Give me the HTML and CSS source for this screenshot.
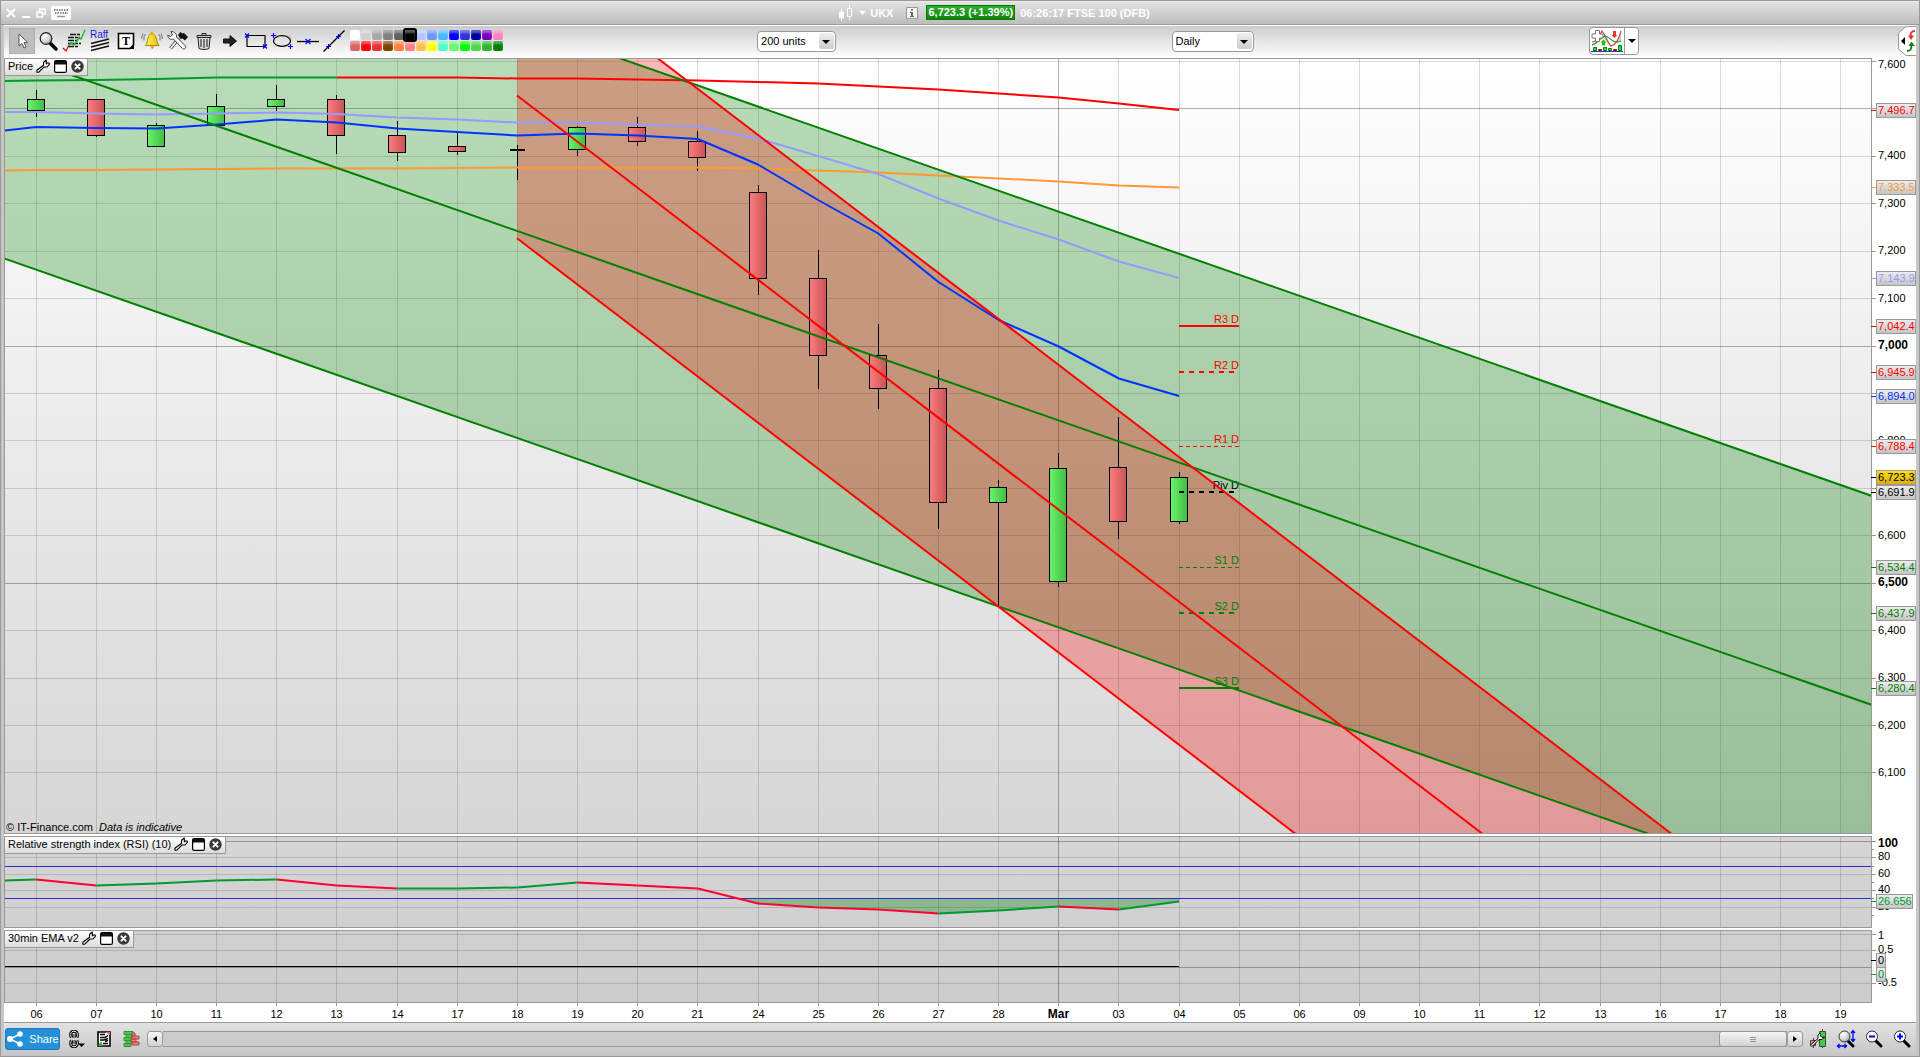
FILE: index.html
```html
<!DOCTYPE html>
<html lang="en">
<head>
<meta charset="utf-8">
<title>UKX – FTSE 100 (DFB)</title>
<link rel="stylesheet" href="styles.css">
</head>
<body>
<svg class="shared-defs" width="0" height="0" aria-hidden="true">
  <defs>
    <linearGradient id="bg-price" x1="0" y1="0" x2="0" y2="1"><stop offset="0" stop-color="#ffffff"/><stop offset="1" stop-color="#d6d6d6"/></linearGradient>
    <linearGradient id="bg-rsi" x1="0" y1="0" x2="0" y2="1"><stop offset="0" stop-color="#d6d6d6"/><stop offset="1" stop-color="#d0d0d0"/></linearGradient>
    <linearGradient id="bg-ema" x1="0" y1="0" x2="0" y2="1"><stop offset="0" stop-color="#d0d0d0"/><stop offset="1" stop-color="#cccccc"/></linearGradient>
    <linearGradient id="candle-up" x1="0" y1="0" x2="1" y2="0"><stop offset="0" stop-color="#69f569"/><stop offset="1" stop-color="#43bb43"/></linearGradient>
    <linearGradient id="candle-down" x1="0" y1="0" x2="1" y2="0"><stop offset="0" stop-color="#fb7d7d"/><stop offset="1" stop-color="#c95555"/></linearGradient>
    <linearGradient id="tag-grey" x1="0" y1="0" x2="0" y2="1"><stop offset="0" stop-color="#eeeeee"/><stop offset="1" stop-color="#c4c4c4"/></linearGradient>
    <linearGradient id="tag-gold" x1="0" y1="0" x2="0" y2="1"><stop offset="0" stop-color="#ffe01c"/><stop offset="1" stop-color="#d9ac10"/></linearGradient>
    <radialGradient id="lens" cx="0.35" cy="0.3" r="0.8"><stop offset="0" stop-color="#ffffff"/><stop offset="0.6" stop-color="#d2d2d2"/><stop offset="1" stop-color="#8c8c8c"/></radialGradient>
    <linearGradient id="gold" x1="0" y1="0" x2="1" y2="0"><stop offset="0" stop-color="#fff36b"/><stop offset="1" stop-color="#f0b400"/></linearGradient>
    <symbol id="wrench" viewBox="0 0 14 14"><path d="M10.300 1 7.600 3.200v3L.9 11.300v1.900h1.900L8 8h3l2.300-2.600V4h-2l-1 .9V2.500z" fill="#fff" stroke="#000" stroke-width="1.100" stroke-linejoin="round"/></symbol>
    <symbol id="restore" viewBox="0 0 13 13"><rect x=".6" y=".6" width="11.8" height="11.8" rx="1.5" fill="#fff" stroke="#000" stroke-width="1.2"/><path d="M1 1h11v3.5H1z" fill="#111"/></symbol>
    <symbol id="close" viewBox="0 0 13 13"><circle cx="6.5" cy="6.5" r="6.2" fill="#3a3a3a"/><path d="M4.4 4.4l4.2 4.2M8.6 4.4 4.4 8.6" stroke="#fff" stroke-width="2" stroke-linecap="round"/></symbol>
  </defs>
</svg>

<header class="titlebar">
  <div class="window-controls">
    <button type="button" aria-label="Close window"><svg width="10" height="10" viewBox="0 0 10 10"><path d="M1 1l8 8M9 1 1 9" stroke="#fff" stroke-width="2"/></svg></button>
    <button type="button" aria-label="Minimise"><svg width="10" height="10" viewBox="0 0 10 10"><path d="M1 9h8" stroke="#fff" stroke-width="2"/></svg></button>
    <button type="button" aria-label="Restore"><svg width="10" height="10" viewBox="0 0 10 10"><path d="M3.5 3V1h6v5H7M1 4h5.5v5H1zM3.500 1.500h6M1 4.500h5.500" fill="none" stroke="#fff" stroke-width="1.4"/></svg></button>
    <button type="button" aria-label="Keyboard"><svg width="20" height="14" viewBox="0 0 20 14"><rect width="20" height="14" rx="2" fill="#fff"/><path d="M3 4h14M4 7h13" stroke="#888" stroke-width="2" stroke-dasharray="1.500 1"/><path d="M6 10.500h8" stroke="#999" stroke-width="1.500"/></svg></button>
  </div>
  <div class="instrument">
    <button type="button" class="symbol-button"><svg width="15" height="16" viewBox="0 0 15 16"><path d="M3.500 4v12M11.500 0v15" stroke="#fff"/><path d="M1 6.500h5v7H1z" fill="#fff"/><path d="M9.500 3.500h4v8h-4z" fill="#cfcfcf" stroke="#fff"/></svg><svg width="7" height="4" viewBox="0 0 7 4"><path d="M0 0h7L3.500 4z" fill="#fff"/></svg>UKX</button>
    <button type="button" class="info" aria-label="Information"><svg width="12" height="12" viewBox="0 0 12 12"><path d="M.5.500h11v11H.5z" fill="#f4f4f4" stroke="#999"/><path d="M5 2h2v1.500H5zM4 5h3v4h1v1H4V9h1V6H4z" fill="#666"/></svg></button>
    <output class="quote">6,723.3 (+1.39%)</output>
    <span class="clock">06:26:17 FTSE 100 (DFB)</span>
  </div>
</header>

<main class="window">
  <div class="toolbar">
    <div class="tools">
      <button type="button" class="tool selected" aria-label="Select"><svg width="24" height="24" viewBox="0 0 24 24"><path d="M9 5v12l3-2.500 2 4.500 2-1-2-4.300 3.500-.4z" fill="#fff" stroke="#555"/></svg></button>
      <button type="button" class="tool" aria-label="Zoom"><svg width="24" height="24" viewBox="0 0 24 24"><path d="M14 14l6 6" stroke="#000" stroke-width="3.500" stroke-linecap="round"/><circle cx="10" cy="9.500" r="5.800" fill="url(#lens)" stroke="#222" stroke-width="1.200"/></svg></button>
      <button type="button" class="tool" aria-label="Draw indicator"><svg width="26" height="24" viewBox="0 0 26 24"><path d="M9 5.500h11M7 8.500h12M7 11.500h10M7 14.500h13M7 17.500h11" stroke="#111" stroke-width="1.400" stroke-dasharray="6 1 3 1"/><path d="M2 19l3 3 3-6" stroke="#f00000" fill="none" stroke-width="1.200"/><path d="M7 17l3-3 3 2 5-7 2 1 4-9" stroke="#19b934" fill="none" stroke-width="1.400"/></svg></button>
      <button type="button" class="tool" aria-label="Raff channel"><svg width="24" height="24" viewBox="0 0 24 24"><text x="11" y="9" class="raff">Raff</text><path d="M3 14.500 21 10M3 18l18-4.500M3 21.500 21 17" stroke="#111" stroke-width="1.300"/></svg></button>
      <button type="button" class="tool" aria-label="Text"><svg width="24" height="24" viewBox="0 0 24 24"><path d="M4.500 4.500h15V16L16 19.500H4.500z" fill="#fff" stroke="#000" stroke-width="1.600"/><text x="12" y="16" class="t-glyph">T</text><path d="M20 15.500V20h-4.500z" fill="#000"/></svg></button>
      <button type="button" class="tool" aria-label="Alert"><svg width="24" height="24" viewBox="0 0 24 24"><path d="M12 4.500c-5 1-3.500 8-6.500 12h13.500c-3-4-2-11-7-12z" fill="url(#gold)" stroke="#a88b00"/><path d="M10 17.500h4.500l-2.300 2.500z" fill="#c79400"/><circle cx="12" cy="4" r="1.400" fill="#e0b000"/><path d="M5.500 5 4 7.500v4M3 4.500 1.800 8v2M18.500 5 20 7.500v4M21 4.500 22.200 8v2" fill="none" stroke="#777"/></svg></button>
      <button type="button" class="tool" aria-label="Settings"><svg width="24" height="24" viewBox="0 0 24 24"><path d="M4.500 19.500 13 9" stroke="#555" stroke-width="3.500"/><path d="M4.500 19.500 13 9" stroke="#fff" stroke-width="1.500"/><path d="M12 6 14.500 3l2 1.500L18 4l4 4-3 3.500-2.500-2-2 .5z" fill="#111"/><path d="M5 2.500 6.500 6 4.500 7.500 1.800 6C2 10 5 11 7.500 10l9 9.500c2 1.500 4-.5 3-2.500L10.500 8c.5-3-2-5.500-5.500-5.500z" fill="#fff" stroke="#444"/></svg></button>
      <button type="button" class="tool" aria-label="Delete"><svg width="24" height="24" viewBox="0 0 24 24"><path d="M6 8.500h12l-1 11c-3 1.300-7 1.300-10 0z" fill="#ddd" stroke="#222"/><path d="M9 10v8M12 10v9M15 10v8" stroke="#444" stroke-width="1.300"/><path d="M5 6.500h14v2H5zM10 6V4.500h4V6" fill="#ccc" stroke="#222"/></svg></button>
      <button type="button" class="tool" aria-label="Arrow"><svg width="24" height="24" viewBox="0 0 24 24"><path d="M5.500 10h6.500V6.500l6.500 5.500-6.500 5.500V14H5.500z" fill="#222" stroke="#111"/></svg></button>
      <button type="button" class="tool" aria-label="Rectangle"><svg width="26" height="24" viewBox="0 0 26 24"><path d="M4 6.500h18v11H4z" fill="none" stroke="#000" stroke-width="1.200"/><path d="M2 4.500l4 4M6 4.500l-4 4M20 15.500l4 4M24 15.500l-4 4" stroke="#00f" stroke-width="1.200"/></svg></button>
      <button type="button" class="tool" aria-label="Ellipse"><svg width="26" height="24" viewBox="0 0 26 24"><path d="M4.500 6.500h17v11h-17z" fill="none" stroke="#bbb" stroke-dasharray="1 1"/><ellipse cx="13" cy="12" rx="8.500" ry="5.300" fill="none" stroke="#000" stroke-width="1.200"/><path d="M4.500 4v5M2 6.500h5M21.500 15v5M19 17.500h5" stroke="#00f" stroke-width="1.200"/></svg></button>
      <button type="button" class="tool" aria-label="Horizontal line"><svg width="26" height="24" viewBox="0 0 26 24"><path d="M2 12.500h22" stroke="#000" stroke-width="1.300"/><path d="M10.500 10l5 5M15.500 10l-5 5" stroke="#00f" stroke-width="1.200"/></svg></button>
      <button type="button" class="tool" aria-label="Line"><svg width="26" height="24" viewBox="0 0 26 24"><path d="M2.500 22.500 23.500 1.500" stroke="#000" stroke-width="1.300"/><path d="M5 17.500h5M7.500 15v5M15 7.500h5M17.500 5v5" stroke="#00f" stroke-width="1.200"/></svg></button>
    </div>
    <div class="palette" id="palette" role="group" aria-label="Colours"></div>
    <span class="space-first"></span>
    <div class="dropdown units"><select aria-label="Units"><option>200 units</option></select></div>
    <span class="space-wide"></span>
    <div class="dropdown period"><select aria-label="Period"><option>Daily</option></select></div>
    <span class="space-wide"></span>
    <div class="split-button">
      <button type="button" aria-label="Add indicator"><svg width="32" height="22" viewBox="0 0 32 22"><path d="M1 15C5 14 8 9 11 5c5 2 5 9 9 12 5-2 8-7 10-16v10c-3 2-6 1-9 6-5 0-7-9-10-12-4 3-5 10-10 11z" fill="#b9e3b9"/><path d="M1 12c5 0 6-5 10-11 4 5 5 11 9 15 5-1 8-7 10-15" fill="none" stroke="#c44" stroke-width="1.200"/><path d="M1 15c5-1 7-6 13-9 5 0 7 9 16 5" fill="none" stroke="#2b9a3c" stroke-width="1.200"/><path d="M4.500.500h4v3.500H12v4H8.500v3.500h-4V8H1V4h3.500z" fill="#fff" stroke="#777"/><path d="M12.500 9.500l3 3h-1.500v3h-3v-3H9.500z" fill="#0c0"/><path d="M22 1h3v4h1.500l-3 3-3-3H22z" fill="#e33"/><path d="M2.500 17.500h3v3h-3zM12.500 17.500h3v3h-3zM17.500 18.500h3v2h-3zM27.500 15.500h3v5h-3z" fill="#0f0" stroke="#171"/><path d="M7.500 19.500h3v1h-3zM22.500 19.500h3v1h-3z" fill="#f00" stroke="#911"/><path d="M0 21.500h32" stroke="#33c"/></svg></button>
      <button type="button" class="more" aria-label="More indicators"></button>
    </div>
    <span class="space-last"></span>
    <button type="button" class="side-tab" aria-label="Open order panel"><svg width="18" height="30" viewBox="0 0 18 30"><path d="M18 .500H8L.5 7v16L8 29.500h10" fill="#fff" stroke="#999"/><path d="M7 11v8l-4-4z" fill="#000"/><path d="M17 5c-4 0-5 3-4 6" fill="none" stroke="#e33" stroke-width="2"/><path d="M10 9.500h6L13 14z" fill="#e33"/><path d="M9 25c4 0 5-3 4-6" fill="none" stroke="#181" stroke-width="2"/><path d="M10.500 20h6.500l-3.500-4.500z" fill="#181"/></svg></button>
  </div>

  <div class="charts">
    <section class="pane price" aria-label="Price">
      <svg class="plot" id="price"></svg>
      <div class="pane-title"><span>Price</span><button type="button" aria-label="Price settings"><svg width="14" height="14"><use href="#wrench"/></svg></button><button type="button" aria-label="Detach price"><svg width="13" height="13"><use href="#restore"/></svg></button><button type="button" aria-label="Close price"><svg width="13" height="13"><use href="#close"/></svg></button></div>
      <p class="credit">© IT-Finance.com <em>Data is indicative</em></p>
    </section>
    <section class="pane rsi" aria-label="Relative strength index">
      <svg class="plot" id="rsi"></svg>
      <div class="pane-title"><span>Relative strength index (RSI) (10)</span><button type="button" aria-label="RSI settings"><svg width="14" height="14"><use href="#wrench"/></svg></button><button type="button" aria-label="Detach RSI"><svg width="13" height="13"><use href="#restore"/></svg></button><button type="button" aria-label="Close RSI"><svg width="13" height="13"><use href="#close"/></svg></button></div>
    </section>
    <section class="pane ema" aria-label="30min EMA v2">
      <svg class="plot" id="ema"></svg>
      <div class="pane-title"><span>30min EMA v2</span><button type="button" aria-label="EMA settings"><svg width="14" height="14"><use href="#wrench"/></svg></button><button type="button" aria-label="Detach EMA"><svg width="13" height="13"><use href="#restore"/></svg></button><button type="button" aria-label="Close EMA"><svg width="13" height="13"><use href="#close"/></svg></button></div>
    </section>
    <div class="pane dates"><svg class="plot" id="dates"></svg></div>
  </div>

  <footer class="statusbar">
    <button type="button" class="share"><svg width="18" height="18" viewBox="0 0 18 18"><path d="M15 3.500 4 9l11 5.500" fill="none" stroke="#fff" stroke-width="1.500"/><circle cx="4" cy="9" r="3" fill="#fff"/><circle cx="14" cy="4" r="2.800" fill="#fff"/><circle cx="14" cy="14" r="2.800" fill="#fff"/></svg>Share</button>
    <button type="button" class="icon chain" aria-label="Link charts"><svg width="16" height="18" viewBox="0 0 16 18"><path d="M2.500 7.500C1 5 1.500 1.200 5 1.200S9 5 7.800 7.500M5 4v4" fill="none" stroke="#000" stroke-width="3"/><path d="M2.500 7.500C1 5 1.500 1.200 5 1.200S9 5 7.800 7.500M5 4v4" fill="none" stroke="#fff" stroke-width="1"/><path d="M2.500 10.500C1 13 1.500 16.800 5 16.800s4-3.800 2.800-6.300M5 10v4" fill="none" stroke="#000" stroke-width="3"/><path d="M2.500 10.500C1 13 1.500 16.800 5 16.800s4-3.800 2.800-6.300M5 10v4" fill="none" stroke="#fff" stroke-width="1"/><path d="M9 13.500h7l-3.500 3.500z" fill="#000"/></svg></button>
    <button type="button" class="icon report" aria-label="Report"><svg width="14" height="16" viewBox="0 0 14 16"><path d="M1 1h12v14H1z" fill="#fff" stroke="#000" stroke-width="1.600"/><path d="M3 3.500h5M3 6.500h5l3-2M3 9h4l4-1.500M6 12.500h5M8 10.500l3-1" stroke="#000" stroke-width="1.500" fill="none"/><path d="M8 1h5v3.500z" fill="#e66"/><path d="M1 15l3-5 2 5z" fill="#2b2"/></svg></button>
    <button type="button" class="icon levels" aria-label="Order book"><svg width="17" height="16" viewBox="0 0 17 16"><path d="M1 .500h9v3H1zM3 3.500h6v3H3zM1 6.500h7v3H1zM3 9.500h6v3H3zM1 12.500h7v3H1z" fill="#3fcf45" stroke="#484"/><path d="M9 2h3v3H9zM9 5h7v3H9zM8 8h5v3H8zM9 11h7v3H9z" fill="#ef8080" stroke="#a44"/></svg></button>
    <div class="scroller">
      <button type="button" class="scroll-left" aria-label="Scroll left"><svg width="4" height="6" viewBox="0 0 4 6"><path d="M4 0v6L0 3z"/></svg></button>
      <div class="track"><div class="thumb"><i></i></div></div>
      <button type="button" class="scroll-right" aria-label="Scroll right"><svg width="4" height="6" viewBox="0 0 4 6"><path d="M0 0v6l4-3z"/></svg></button>
    </div>
    <button type="button" class="icon" aria-label="Chart settings"><svg width="18" height="20" viewBox="0 0 18 20"><path d="M4.500 9v10M13.500 0v19" stroke="#444"/><path d="M1.500 11.500h5v5h-5z" fill="#f08a7a" stroke="#444"/><path d="M10.500 2.500h6v15h-6z" fill="#4c4" stroke="#444"/><path d="M11 4 9 6v3.500l-7 6c-.8 1.500.5 2.500 1.700 1.500L10 10.500h3l2.500-2.500-2.500.5L11.500 7z" fill="#fff" stroke="#000"/></svg></button>
    <button type="button" class="icon" aria-label="Fit chart"><svg width="20" height="20" viewBox="0 0 20 20"><path d="M12 12l5 5" stroke="#000" stroke-width="3" stroke-linecap="round"/><circle cx="8.500" cy="7.500" r="5.500" fill="url(#lens)" stroke="#333"/><path d="M17 2v10M15 4l2-2.500L19 4M15 10l2 2.500 2-2.500M2 17h8M3.500 15 1.500 17l2 2M8.500 15l2 2-2 2" fill="none" stroke="#00f" stroke-width="1.300"/></svg></button>
    <button type="button" class="icon" aria-label="Zoom out"><svg width="20" height="20" viewBox="0 0 20 20"><path d="M12 12l5 5" stroke="#000" stroke-width="3" stroke-linecap="round"/><circle cx="8" cy="7.500" r="5.500" fill="#fff" stroke="#222"/><path d="M5 7.500h6" stroke="#00f" stroke-width="2"/></svg></button>
    <button type="button" class="icon" aria-label="Zoom in"><svg width="20" height="20" viewBox="0 0 20 20"><path d="M12 12l5 5" stroke="#000" stroke-width="3" stroke-linecap="round"/><circle cx="8" cy="7.500" r="5.500" fill="#fff" stroke="#222"/><path d="M5 7.500h6M8 4.500v6" stroke="#00f" stroke-width="2"/></svg></button>
  </footer>
</main>
<script src="chart.js"></script>
</body>
</html>
```
FILE: styles.css
```css
* { box-sizing: border-box; }

body {
  margin: 0;
  height: 100vh;
  min-height: 480px;
  display: flex;
  flex-direction: column;
  border: 1px solid #999;
  background: #c6c6c6;
  font: 11px/16px "Liberation Sans", Arial, sans-serif;
  color: #000;
  overflow: hidden;
}

button {
  display: flex;
  align-items: center;
  justify-content: center;
  padding: 0;
  border: 0;
  background: none;
  font: inherit;
  color: inherit;
}

svg { display: block; flex: none; }
.shared-defs { position: absolute; }

/* Title bar */
.titlebar {
  display: flex;
  height: 24px;
  border-top: 1px solid #ececec;
  border-bottom: 1px solid #999;
  background: linear-gradient(#e2e2e2, #bdbdbd);
  color: #fff;
  font-weight: bold;
}
.window-controls {
  display: flex;
  align-items: center;
  gap: 5px;
  padding-left: 5px;
}
.instrument {
  flex: 1;
  display: flex;
  align-items: center;
  justify-content: center;
  padding: 0 2px 1px 0;
}
.symbol-button { gap: 4px; }
.symbol-button svg:first-child { margin-right: 2px; }
.info { margin: 0 8px 0 13px; }
.quote {
  height: 15px;
  line-height: 13px;
  padding: 0 1px;
  margin-right: 5px;
  border: 1px solid #007800;
  background: linear-gradient(#2fae2f, #0c860c);
}

/* Toolbar */
.window {
  flex: 1;
  min-height: 0;
  display: flex;
  flex-direction: column;
  padding: 0 3px 3px;
}
.toolbar {
  display: flex;
  align-items: center;
  height: 33px;
  padding: 0 0 2px 5px;
  border-top: 1px solid #fff;
  background: linear-gradient(#cccccc, #ffffff);
}
.tools { display: flex; }
.tool { width: 26px; height: 26px; }
.tool.selected { background: #bdbdbd; border: 1px solid #b0b0b0; }
.raff { font: 10px "Liberation Sans", Arial, sans-serif; fill: #2020e0; text-anchor: middle; }
.t-glyph { font: bold 12px "Liberation Serif", serif; text-anchor: middle; }
.palette {
  display: grid;
  grid-template-columns: repeat(14, 11px);
  grid-auto-rows: 11px;
  margin-left: 3px;
}
.swatch {
  width: 10px;
  height: 10px;
  border-radius: 2px;
  box-shadow: inset 0 3px 2px rgba(255, 255, 255, .35);
}
.swatch.current { outline: 2px solid #000; border-radius: 1px; z-index: 1; }
.space-first { flex: 43; }
.space-wide { flex: 57; }
.space-last { flex: 44; }

.dropdown {
  position: relative;
  height: 21px;
}
.units { width: 79px; }
.period { width: 82px; }
.dropdown select {
  display: block;
  appearance: none;
  width: 100%;
  height: 100%;
  padding: 0 20px 0 3px;
  border: 1px solid #999;
  border-radius: 4px;
  background: #fff;
  font: inherit;
  color: #000;
}
.dropdown::before {
  content: "";
  position: absolute;
  right: 2px;
  top: 2px;
  width: 15px;
  height: 16px;
  border-radius: 3px;
  background: linear-gradient(#eeeeee, #cccccc);
  pointer-events: none;
}
.dropdown::after, .more::after {
  content: "";
  border: 4px solid transparent;
  border-top-color: #000;
  border-bottom: 0;
}
.dropdown::after {
  position: absolute;
  right: 6px;
  top: 9px;
  pointer-events: none;
}
.split-button {
  display: flex;
  width: 50px;
  height: 28px;
  border: 1px solid #999;
  border-radius: 4px;
  background: #fff;
}
.split-button button:first-child { flex: 1; }
.more { width: 14px; border-left: 1px solid #999; }

/* Chart panes */
.charts {
  flex: 1;
  min-height: 0;
  display: flex;
  flex-direction: column;
  gap: 2px;
  background: #fff;
}
.pane { position: relative; flex: none; }
.pane.price { flex: 1; min-height: 0; }
.pane.rsi { height: 92px; }
.pane.ema { height: 73px; }
.pane.dates { height: 19px; margin-top: -2px; }
.plot { width: 100%; height: 100%; overflow: visible; }

.pane-title {
  position: absolute;
  left: 1px;
  top: 1px;
  display: flex;
  align-items: center;
  gap: 4px;
  height: 17px;
  padding: 0 3px 2px;
  border: solid #999;
  border-width: 0 1px 1px 0;
  background: linear-gradient(#ffffff, #dcdcdc);
}
.pane-title span { margin-right: -1px; }
.credit {
  position: absolute;
  left: 2px;
  bottom: 0;
  margin: 0;
  line-height: 14px;
}
.credit em { margin-left: 3px; }

.grid { stroke: #000; stroke-opacity: .14; shape-rendering: crispEdges; }
.grid.major { stroke-opacity: .3; }
.frame { stroke: #999; shape-rendering: crispEdges; }
.guide { stroke: #2c2ccc; shape-rendering: crispEdges; }
.line { fill: none; stroke-width: 2; stroke-linejoin: round; }
.band-green { fill: #008000; fill-opacity: .28; }
.band-red { fill: #ff0000; fill-opacity: .28; }
.band-rsi { fill: #008000; fill-opacity: .33; }
.wick { stroke: #000; shape-rendering: crispEdges; }
.doji { stroke: #000; stroke-width: 2; shape-rendering: crispEdges; }
.body { stroke: #000; shape-rendering: crispEdges; }
.up { fill: url(#candle-up); }
.down { fill: url(#candle-down); }
.tag { stroke: #999; fill: url(#tag-grey); shape-rendering: crispEdges; }
.tag.gold { fill: url(#tag-gold); }
.strong { font-size: 12px; font-weight: bold; }
.end { text-anchor: end; }
.mid { text-anchor: middle; }

/* Bottom bar */
.statusbar {
  display: flex;
  align-items: center;
  height: 31px;
  padding: 2px 0 0 1px;
  border-top: 1px solid #999;
  background: linear-gradient(#e2e2e2, #c9c9c9);
}
.share {
  gap: 5px;
  width: 55px;
  height: 22px;
  border: 1px solid #1c78b8;
  border-radius: 3px;
  background: #2490da;
  color: #fff;
}
.icon { width: 28px; height: 22px; }
.chain { margin-left: 3px; }
.report { width: 26px; }
.scroller {
  flex: 1;
  display: flex;
  height: 16px;
  margin: 0 1px 0 2px;
}
.scroll-left, .scroll-right, .thumb {
  border: 1px solid #999;
  border-radius: 3px;
  background: linear-gradient(#f6f6f6, #d2d2d2);
}
.scroll-left, .scroll-right { width: 16px; }
.track {
  flex: 1;
  display: flex;
  justify-content: flex-end;
  border: solid #999;
  border-width: 1px 0;
  background: #cbcbcb;
}
.thumb {
  display: flex;
  align-items: center;
  justify-content: center;
  width: 68px;
  margin: -1px 0;
}
.thumb i {
  width: 6px;
  height: 5px;
  background: repeating-linear-gradient(#999 0 1px, transparent 1px 2px);
}
```
FILE: chart.js
```js
// Layout units: the plot is 1867 wide and starts at x = 4; every pane keeps its own vertical origin.
const PLOT_W = 1867, AXIS_W = 45, LEFT = 4;
const FIRST_DAY = 36.2, DAY_STEP = 60.15;
const DAYS = ['06','07','10','11','12','13','14','17','18','19','20','21','24','25','26','27','28','Mar','03','04','05','06','09','10','11','12','13','16','17','18','19'];
const dayX = i => FIRST_DAY + i * DAY_STEP;

// day index, high, body top, body bottom, low, direction
const CANDLES = [
  [0,90,99,110,117,'up'],[1,99,99,135,137,'down'],[2,123,125,146,147,'up'],[3,94,106,125,127,'up'],
  [4,85,99,106,111,'up'],[5,95,99,135,154,'down'],[6,121,135,152,161,'down'],[7,131,146,151,155,'down'],
  [8,145,150,150,180,'doji'],[9,126,127,149,156,'up'],[10,117,127,141,146,'down'],[11,131,141,157,171,'down'],
  [12,185,192,278,295,'down'],[13,250,278,355,389,'down'],[14,324,355,388,409,'down'],[15,370,388,502,529,'down'],
  [16,480,487,502,606,'up'],[17,453,468,581,587,'up'],[18,417,467,521,539,'down'],[19,472,477,521,524,'up']
];
// The first value sits on the left edge, the others on successive days.
const AVERAGES = [
  ['#ff9933',[170.5,170,170,169.5,169,168.5,168.5,168.5,168,167.5,167.5,167.5,167.5,168.5,170.5,172.5,175.5,178.5,181.5,185.5,187.5]],
  ['#9999ff',[112,112,113.5,114.5,113.5,112.5,114,117.5,119.5,122.5,122.5,124.5,126.5,138.5,156,174,198.5,220.5,239.5,261.5,278]],
  ['#0033ff',[130.5,127,128,128.5,124.5,119.5,122.5,128.5,132,135.5,133.5,135.5,139,164.5,200,233.5,282,320,346.5,378.5,396]]
];
const LONG = [81,80.5,80,79,77.5,77.5,77.5,77.5,77.5,78.5,78.5,79.5,80.5,82,83.5,86.5,89.5,93.5,97.5,103.5,110];
const RSI = [880.5,879.5,885.5,883.5,880.5,879.5,885.5,888.5,888.5,887.5,882.5,885.5,888.5,903.5,907.5,909.5,913.5,910.5,906.5,909.5,901.5];
const PIVOTS = [
  ['R3 D',326,'#ff0000',2,''],['R2 D',372,'#ff0000',2,'5 5'],['R1 D',446.5,'#ff0000',1,'4 3'],['Piv D',492,'#000000',2,'5 5'],
  ['S1 D',567.5,'#008000',1,'4 3'],['S2 D',613,'#008000',2,'5 5'],['S3 D',688,'#008000',2,'']
];
const TAGS = [
  ['7,496.7',110,'#ff0000'],['7,333.5',187,'#ff9933'],['7,143.9',278,'#9999ff'],['7,042.4',326,'#ff0000'],
  ['6,945.9',372,'#ff0000'],['6,894.0',396,'#0033ff'],['6,788.4',446,'#ff0000'],['6,691.9',492,'#000000'],
  ['6,723.3',477,'#000000','gold'],['6,534.4',567,'#008000'],['6,437.9',613,'#008000'],['6,280.4',688,'#008000']
];
// Levels whose labels would sit entirely behind a value tag.
const COVERED = [7500, 6900, 6700];
const COLOURS = [
  ['#ffffff','#d0d0d0','#a8a8a8','#808080','#606060','#000000','#b4c8ff','#6e96ff','#4cb8ff','#0000ff','#3232dc','#0000a0','#7800be','#ff80be'],
  ['#dc6464','#ff0000','#eb3232','#784600','#ff8040','#ff8282','#ffbe50','#ffff00','#50ffc8','#6ef578','#00ff00','#50d750','#32b432','#008000']
];

function pane(id, top, height) {
  const svg = document.getElementById(id);
  const box = svg.getBoundingClientRect();
  const w = Math.max(box.width - AXIS_W, 50), kx = w / PLOT_W, ky = box.height / height;
  const out = [];
  const X = x => +((x - LEFT) * kx).toFixed(2);
  const Y = y => +((y - top) * ky).toFixed(2);
  const px = v => Math.floor(v) + 0.5;
  const add = s => out.push(s);
  const raw = (x1, y1, x2, y2, cls, extra = '') => add(`<line x1="${x1}" y1="${y1}" x2="${x2}" y2="${y2}" class="${cls}" ${extra}/>`);
  const text = (x, y, s, cls = '', fill = '#000') => add(`<text x="${x}" y="${y}" class="${cls}" fill="${fill}">${s}</text>`);
  return {
    w, h: box.height, X, Y, px, add, raw, text,
    background(fill) {
      add(`<defs><clipPath id="clip-${id}"><rect x="1" y="1" width="${w - 1}" height="${box.height - 2}"/></clipPath></defs>`);
      add(`<rect width="${w}" height="${box.height}" fill="url(#${fill})"/>`);
    },
    days() { DAYS.forEach((d, i) => raw(px(X(dayX(i))), 0, px(X(dayX(i))), box.height, d === 'Mar' ? 'grid major' : 'grid')); },
    level(y, major) { raw(0, px(Y(y)), w, px(Y(y)), major ? 'grid major' : 'grid'); },
    tick(y, label, cls = '', shift = 3, len = 5) {
      raw(w, px(Y(y)), w + len, px(Y(y)), 'frame');
      if (label) text(w + 7, Math.round(Y(y)) + shift, label, cls);
    },
    poly(points, cls, extra = '', shape = 'polyline') {
      add(`<${shape} points="${points.map(p => X(p[0]) + ',' + Y(p[1])).join(' ')}" class="${cls}" ${extra}/>`);
    },
    tag(y, label, fill, kind = '', width = 39) {
      const cy = px(Y(y));
      raw(w, cy, w + 5, cy, '', `stroke="${fill}"`);
      add(`<rect x="${w + 5.5}" y="${cy - 7}" width="${width}" height="14" class="tag ${kind}"/>`);
      text(w + 7, cy + 3.5, label, '', fill);
    },
    frame() {
      raw(0, .5, w + 1, .5, 'frame');
      raw(0, box.height - .5, w + 1, box.height - .5, 'frame');
      raw(.5, 0, .5, box.height, 'frame');
      raw(w + .5, 0, w + .5, box.height, 'frame');
    },
    clipped(draw) { add(`<g clip-path="url(#clip-${id})">`); draw(); add('</g>'); },
    done() { svg.innerHTML = out.join(''); }
  };
}

const series = values => values.map((v, i) => [i ? dayX(i - 1) : LEFT, v]);

function drawPrice() {
  const p = pane('price', 58, 776);
  p.background('bg-price');
  p.days();
  const priceY = v => 61.5 + (7600 - v) * 0.4743;
  for (let v = 7600; v >= 6100; v -= 100) p.level(priceY(v), v % 500 === 0);
  p.clipped(() => {
    p.poly([[4,-157],[1872,496],[1872,912],[4,258.4]], 'band-green', '', 'polygon');
    p.poly([[517,-49.4],[1692,849.5],[1316,849.5],[517,238.3]], 'band-red', '', 'polygon');
    CANDLES.forEach(([i, high, top, bottom, low, kind]) => {
      const x = p.px(p.X(dayX(i)));
      p.raw(x, p.Y(high), x, p.Y(low), 'wick');
      if (kind === 'doji') p.raw(x - 8, p.Y(top), x + 7, p.Y(top), 'doji');
      else p.add(`<rect x="${x - 9}" y="${p.px(p.Y(top))}" width="17" height="${Math.round(p.Y(bottom) - p.Y(top))}" class="body ${kind}"/>`);
    });
    AVERAGES.forEach(([colour, values]) => p.poly(series(values), 'line', `stroke="${colour}"`));
    p.poly(series(LONG).slice(0, 7), 'line', 'stroke="#009933"');
    p.poly(series(LONG).slice(6), 'line', 'stroke="#ff0000"');
    PIVOTS.forEach(([label, y, colour, width, dash]) => {
      p.raw(p.X(1179), p.Y(y), p.X(1239), p.Y(y), '', `stroke="${colour}" stroke-width="${width}" stroke-dasharray="${dash}"`);
      p.text(p.X(1239), Math.floor(p.Y(y)) - 3, label, 'end', colour);
    });
    [[4,-157,1872,496],[4,51.4,1872,705],[4,258.4,1872,912]].forEach(c => p.poly([[c[0],c[1]],[c[2],c[3]]], 'line', 'stroke="#008000"'));
    [[517,-49.4,1692,849.5],[517,95.5,1503,849.5],[517,238.3,1316,849.5]].forEach(c => p.poly([[c[0],c[1]],[c[2],c[3]]], 'line', 'stroke="#ff0000"'));
  });
  p.frame();
  for (let v = 7600; v >= 6100; v -= 100)
    p.tick(priceY(v), COVERED.includes(v) ? '' : v.toLocaleString('en-US'), v % 500 === 0 ? 'strong' : '', v === 7600 ? 6 : 3);
  TAGS.forEach(([label, y, colour, kind]) => p.tag(y, label, colour, kind));
  p.done();
}

function drawRsi() {
  const p = pane('rsi', 836, 92);
  p.background('bg-rsi');
  p.days();
  [[841,'100'],[857,'80'],[874,'60'],[890,'40'],[907,'20']].forEach(([y, l]) => p.level(y, l === '100'));
  p.clipped(() => {
    const low = series(RSI).slice(13);
    p.poly([[739,898.5], ...low, [dayX(19),898.5]], 'band-rsi', '', 'polygon');
    [866, 898].forEach(y => p.raw(0, p.px(p.Y(y)), p.w, p.px(p.Y(y)), 'guide'));
    const pts = series(RSI);
    for (let i = 1; i < pts.length; i++)
      p.poly([pts[i - 1], pts[i]], 'line', `stroke="${pts[i][1] > pts[i - 1][1] ? '#ff0033' : '#009933'}"`);
  });
  p.frame();
  [[841,'100','strong',6],[857,'80'],[874,'60'],[890,'40'],[907,'20']].forEach(([y, l, c, s]) => p.tick(y, l, c, s || 3));
  [849, 866, 882, 898, 915].forEach(y => p.tick(y, '', '', 0, 3));
  p.tag(901, '26.656', '#009933', '', 36);
  p.done();
}

function drawEma() {
  const p = pane('ema', 930, 73);
  p.background('bg-ema');
  p.days();
  [934, 950, 967, 983].forEach(y => p.level(y, y === 967));
  p.raw(0, p.px(p.Y(966)), p.X(dayX(19)), p.px(p.Y(966)), 'wick');
  p.frame();
  [[934,'1',5],[950,'0.5',3],[983,'-0.5',3]].forEach(([y, l, s]) => p.tick(y, l, '', s));
  p.tag(960, '0', '#000000', '', 9);
  p.tag(974, '0', '#009933', '', 9);
  p.done();
}

function drawDates() {
  const p = pane('dates', 0, 19);
  DAYS.forEach((d, i) => {
    const x = p.px(p.X(dayX(i)));
    p.raw(x, 0, x, 3, 'frame');
    p.text(x, 15, d, d === 'Mar' ? 'mid strong' : 'mid');
  });
  p.done();
}

function draw() { drawPrice(); drawRsi(); drawEma(); drawDates(); }

document.getElementById('palette').innerHTML = COLOURS.flat()
  .map(c => `<button type="button" class="swatch${c === '#000000' ? ' current' : ''}" style="background:${c}" aria-label="Colour ${c}"></button>`).join('');
draw();
window.addEventListener('resize', draw);
```
